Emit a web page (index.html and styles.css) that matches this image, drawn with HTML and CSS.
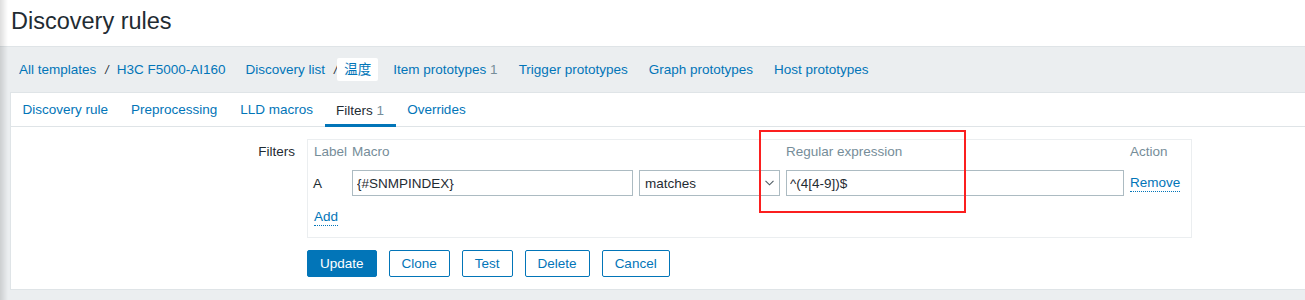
FILE: index.html
```html
<!DOCTYPE html>
<html lang="en">
<head>
    <meta charset="UTF-8">
    <meta name="viewport" content="width=device-width, initial-scale=1.0">
    <title>Discovery rules</title>
    <link rel="stylesheet" href="styles.css">
</head>
<body>
    <header class="page-header">
        <h1 class="title">Discovery rules</h1>
    </header>

    <main class="content">
        <nav class="breadcrumbs">
            <a class="crumb" href="#">All templates</a>
            <span class="sep">/</span>
            <a class="crumb" href="#">H3C F5000-AI160</a>
            <a class="crumb gap list" href="#">Discovery list</a>
            <span class="sep">/</span>
            <span class="crumb-current">温度</span>
            <a class="crumb gap" href="#">Item prototypes <span class="count">1</span></a>
            <a class="crumb gap" href="#">Trigger prototypes</a>
            <a class="crumb gap" href="#">Graph prototypes</a>
            <a class="crumb gap" href="#">Host prototypes</a>
        </nav>

        <div class="panel">
            <ul class="tabs">
                <li><a href="#">Discovery rule</a></li>
                <li><a href="#">Preprocessing</a></li>
                <li><a href="#">LLD macros</a></li>
                <li class="active"><a href="#">Filters <span class="count">1</span></a></li>
                <li><a href="#">Overrides</a></li>
            </ul>

            <form class="form">
                <label class="form-label">Filters</label>
                <div class="filter-box">
                    <div class="filter-grid">
                        <div class="th">Label</div>
                        <div class="th">Macro</div>
                        <div class="th"></div>
                        <div class="th">Regular expression</div>
                        <div class="th">Action</div>

                        <div class="cell label-cell">A</div>
                        <div class="cell"><input class="text-input macro" type="text" value="{#SNMPINDEX}"></div>
                        <div class="cell">
                            <div class="select">
                                <span>matches</span>
                                <svg class="chevron" width="9" height="6" viewBox="0 0 9 6">
                                    <path d="M0.5 0.8 L4.5 4.8 L8.5 0.8" fill="none" stroke="#4f5b63" stroke-width="1.1"/>
                                </svg>
                            </div>
                        </div>
                        <div class="cell"><input class="text-input regex" type="text" value="^(4[4-9])$"></div>
                        <div class="cell"><a class="dotted" href="#">Remove</a></div>
                    </div>
                    <div class="add-row"><a class="dotted" href="#">Add</a></div>
                </div>

                <div class="form-label"></div>
                <div class="buttons">
                    <button type="button" class="btn primary">Update</button>
                    <button type="button" class="btn">Clone</button>
                    <button type="button" class="btn">Test</button>
                    <button type="button" class="btn">Delete</button>
                    <button type="button" class="btn">Cancel</button>
                </div>
            </form>
        </div>
    </main>

    <div class="highlight"></div>
</body>
</html>
```

FILE: styles.css
```css
body {
    font-family: "Liberation Sans", Arial, "Noto Sans CJK SC", sans-serif;
    font-size: 13.5px;
    color: #1f2c33;
    background: #ebeef0;
    margin: 0;
    min-height: 300px;
}
body::before {
    content: "";
    position: fixed;
    left: 0;
    top: 0;
    bottom: 0;
    width: 8px;
    background: linear-gradient(to right, rgba(0,0,0,0.13), rgba(0,0,0,0));
    z-index: 5;
}
a {
    color: #0275b8;
    text-decoration: none;
}
.page-header {
    background: white;
    height: 46px;
    box-sizing: border-box;
    padding: 6px 0 0 11px;
}
.title {
    margin: 0;
    font-size: 23.5px;
    font-weight: normal;
    line-height: 30px;
}
.content {
    border-top: 1px solid #dfe4e7;
    padding-left: 10px;
}
.breadcrumbs {
    height: 45px;
    display: flex;
    align-items: center;
    padding-left: 9px;
}
.sep {
    margin: 0 8px 0 9px;
    font-size: 12px;
    font-style: italic;
}
.crumb.gap {
    margin-left: 21px;
}
.crumb.list {
    margin-left: 20px;
}
.crumb-current {
    background: white;
    border-radius: 2px;
    padding: 0 7px;
    height: 23px;
    line-height: 23px;
    margin-left: -8px;
    margin-right: -6px;
    font-size: 13.5px;
    color: #0275b8;
}
.count {
    color: #768d99;
}
.panel {
    background: white;
    border: 1px solid #dfe4e7;
    border-right: none;
    padding-bottom: 12px;
}
.tabs {
    list-style: none;
    margin: 0;
    padding: 0;
    display: flex;
    border-bottom: 1px solid #dfe4e7;
    height: 33px;
}
.tabs li {
    height: 33px;
    box-sizing: border-box;
    padding: 0 11.5px;
    display: flex;
    align-items: center;
}
.tabs li.active {
    border-bottom: 3px solid #0275b8;
    padding-top: 3px;
    margin-bottom: -1px;
    height: 34px;
}
.tabs li.active a {
    color: #1f2c33;
}
.form {
    display: grid;
    grid-template-columns: 284px auto;
    column-gap: 12px;
    row-gap: 12px;
    padding-top: 12px;
    align-items: start;
}
.form-label {
    text-align: right;
    padding-top: 5px;
    line-height: 16px;
}
.filter-box {
    justify-self: start;
    border: 1px solid #ebeef0;
    padding: 3px 11px 10px 6px;
}
.filter-grid {
    display: grid;
    grid-template-columns: 32px 281px 141px 338px auto;
    column-gap: 6px;
    align-items: center;
}
.th {
    color: #768d99;
    line-height: 18px;
    margin-bottom: 9px;
}
.cell {
    height: 26px;
    display: flex;
    align-items: center;
}
.label-cell {
    margin-left: -1px;
}
.text-input {
    font-family: "Liberation Sans", Arial, sans-serif;
    font-size: 13.5px;
    color: #1f2c33;
    border: 1px solid #acbbc2;
    height: 26px;
    box-sizing: border-box;
    padding: 0 4px;
    margin: 0;
    outline: none;
}
.macro {
    width: 281px;
}
.regex {
    width: 338px;
    padding-left: 3px;
}
.select {
    width: 141px;
    height: 26px;
    box-sizing: border-box;
    border: 1px solid #acbbc2;
    display: flex;
    align-items: center;
    justify-content: space-between;
    padding: 0 5px 0 5px;
}
.chevron {
    display: block;
}
.dotted {
    border-bottom: 1px dotted #0275b8;
    line-height: 16px;
}
.add-row {
    margin-top: 13px;
    height: 18px;
    display: flex;
    align-items: flex-start;
}
.buttons {
    display: flex;
    gap: 12px;
}
.btn {
    font-family: "Liberation Sans", Arial, sans-serif;
    font-size: 13.5px;
    height: 27px;
    padding: 0 12px;
    border: 1px solid #0275b8;
    border-radius: 2px;
    background: white;
    color: #0275b8;
    cursor: pointer;
}
.btn.primary {
    background: #0275b8;
    color: white;
}
.highlight {
    position: absolute;
    left: 759px;
    top: 130px;
    width: 207px;
    height: 83px;
    box-sizing: border-box;
    border: 2.5px solid #fb1f1f;
}
```
